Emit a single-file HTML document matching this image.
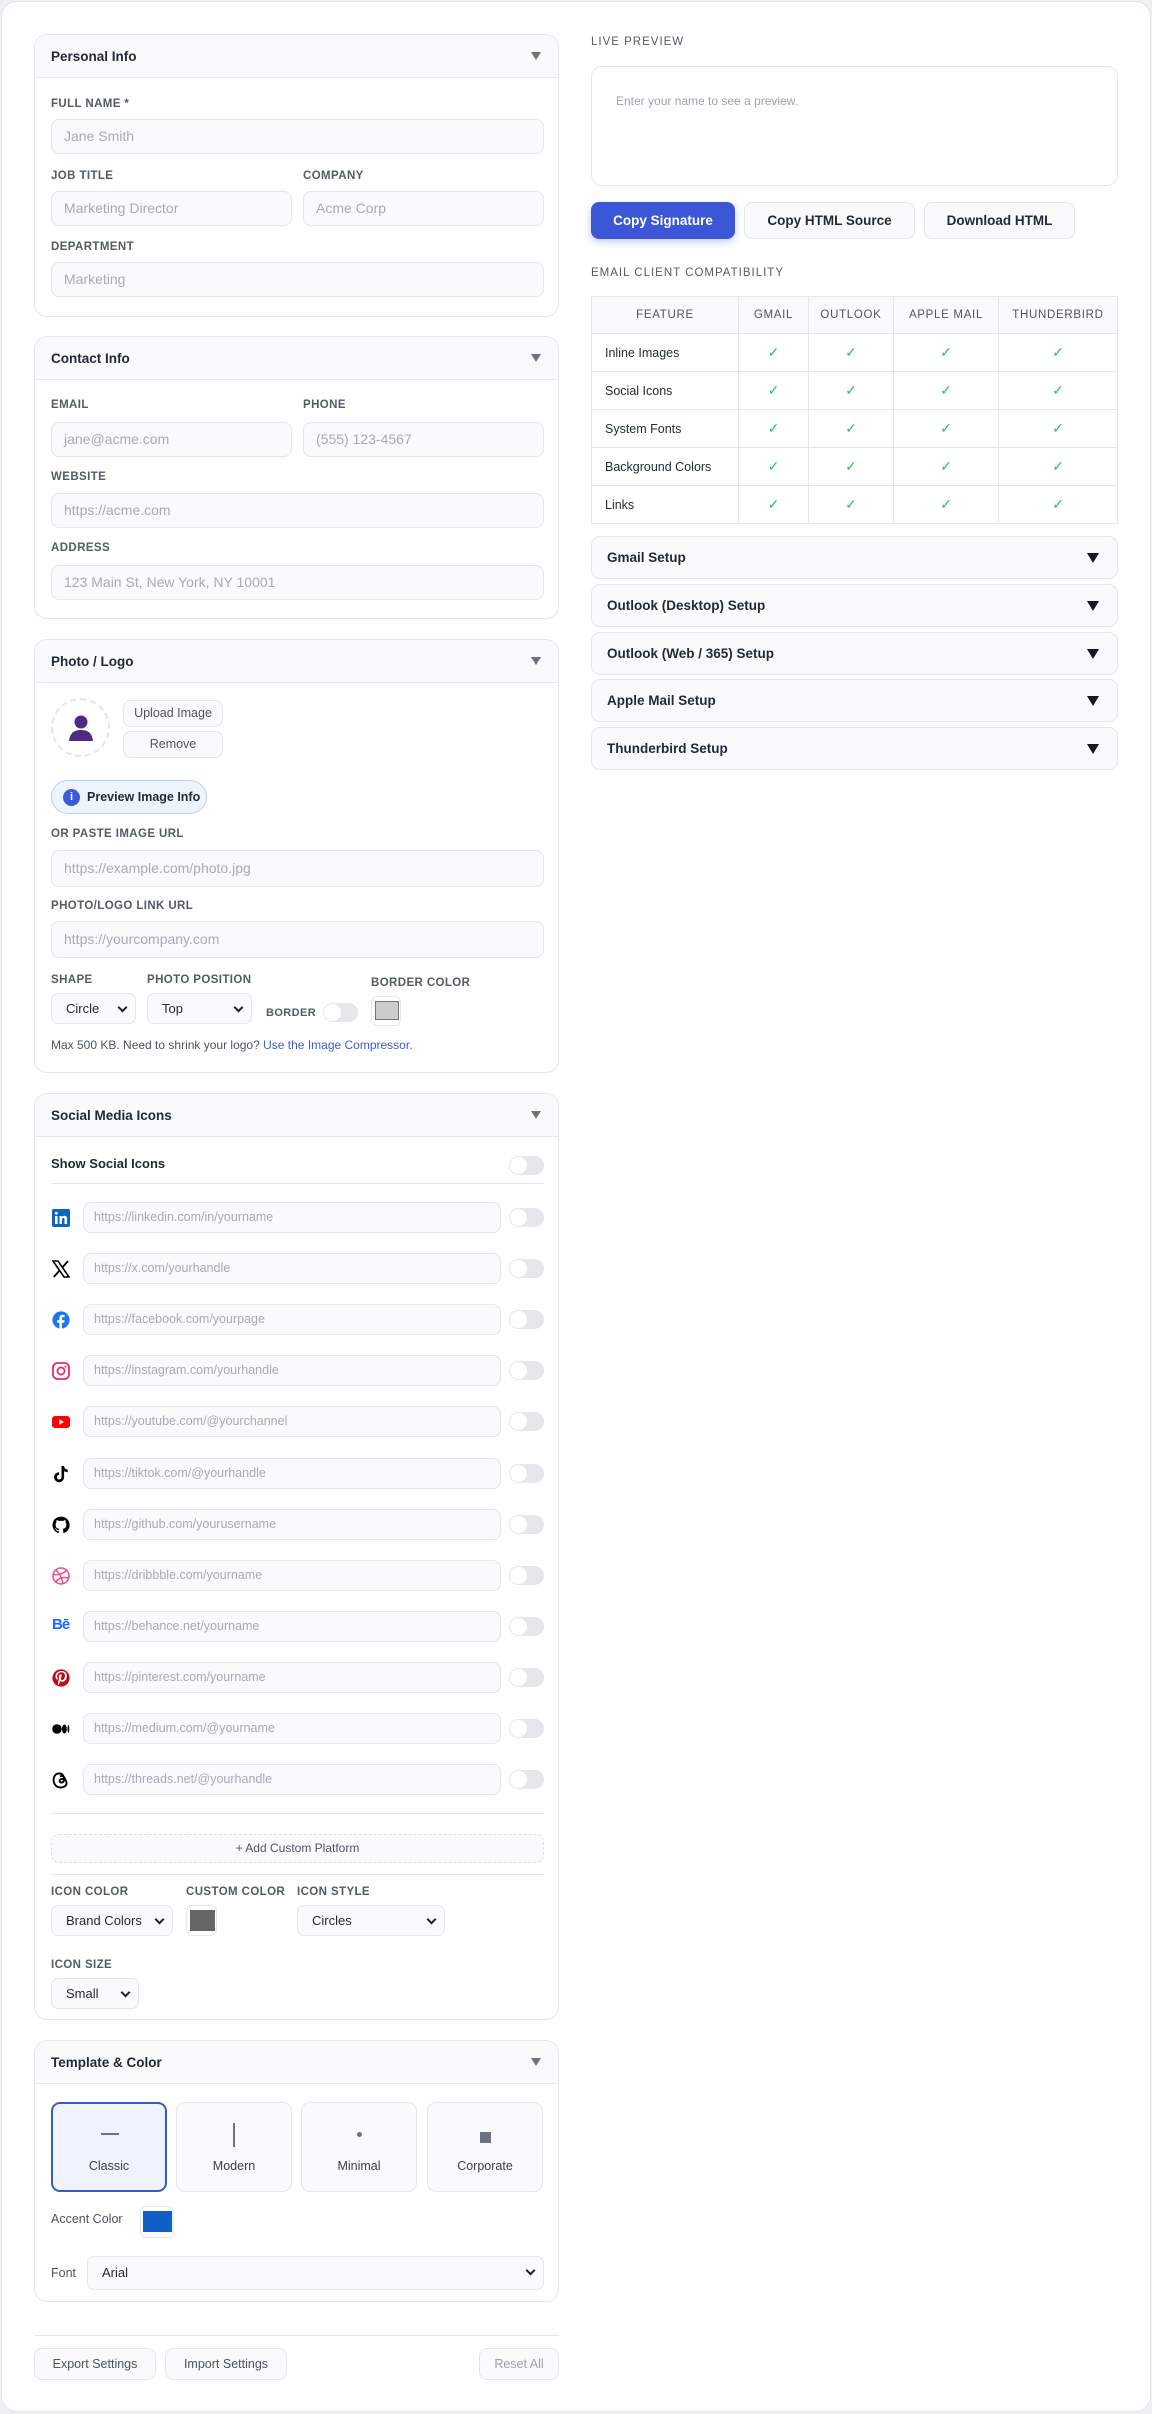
<!DOCTYPE html>
<html><head><meta charset="utf-8"><style>
*{box-sizing:border-box;margin:0;padding:0}
body{width:1152px;height:2414px;background:#eef0f3;font-family:"Liberation Sans",Arial,sans-serif;position:relative;overflow:hidden;color:#111827}
.a{position:absolute}
.wrap{left:1px;top:1px;width:1150px;height:2411px;background:#fff;border:1px solid #e3e6ea;border-radius:16px}
.card{position:absolute;left:34px;width:525px;border:1px solid #e3e7ec;border-radius:13px;background:#fff;overflow:hidden}
.hd{height:43px;background:#f8fafc;border-bottom:1px solid #e6e9ee;padding:0 0 0 16px;font-size:13.5px;font-weight:bold;line-height:43px;color:#1f2937;position:relative}
.hd:after{content:"";position:absolute;right:17px;top:17px;border-left:5px solid transparent;border-right:5px solid transparent;border-top:8px solid #6b7280}
.lb{position:absolute;font-size:11.5px;font-weight:bold;color:#525b68;letter-spacing:.4px}
.in{position:absolute;height:35px;background:#f8fafc;border:1px solid #e3e7ec;border-radius:8px;font-size:14px;color:#a6acb5;padding-left:12px;line-height:33px;white-space:nowrap}
.btn{position:absolute;border:1px solid #e3e7ec;border-radius:8px;background:#f8fafc;font-size:12.5px;color:#4b5563;text-align:center}
.sel{position:absolute;height:31px;background:#f8fafc;border:1px solid #e3e7ec;border-radius:7px;font-size:13px;color:#1f2937;padding-left:14px;line-height:29px}
.sel:after{content:"";position:absolute;right:9px;top:10px;width:5px;height:5px;border-right:2px solid #222;border-bottom:2px solid #222;transform:rotate(45deg)}
.tg{position:absolute;width:35px;height:19px;border-radius:10px;background:#e5e7eb}
.tg:before{content:"";position:absolute;left:1px;top:1px;width:17px;height:17px;border-radius:50%;background:#fff}
.soc{position:absolute;left:17px;width:18px;height:18px}
.acc{position:absolute;left:591px;width:527px;height:43px;border:1px solid #e3e7ec;border-radius:9px;background:#f8fafc;font-size:13.5px;font-weight:bold;color:#1f2937;padding-left:15px;line-height:41px}
.acc:after{content:"";position:absolute;right:18px;top:16px;border-left:6px solid transparent;border-right:6px solid transparent;border-top:10px solid #111827}
table{border-collapse:collapse;position:absolute;left:591px;top:296px;width:527px;font-size:12px}
td,th{border:1px solid #e3e7ec;height:38px}
th{height:37px;background:#f8fafc;font-weight:normal;color:#4b5563;letter-spacing:.7px;font-size:11.5px}
td{text-align:center;color:#22c55e;font-size:14px}
td.f{text-align:left;padding-left:13px;color:#1f2937;font-size:12.5px}
.tile{position:absolute;top:61px;width:116px;height:90px;border:1px solid #e3e7ec;border-radius:9px;background:#f8fafc;text-align:center;font-size:12.5px;color:#374151}
.tile span{position:absolute;left:0;right:0;top:56px}
</style></head><body>
<div class="a wrap"></div>

<div class="card" style="top:34px;height:283px">
<div class="hd">Personal Info</div>
<div class="lb" style="left:16px;top:63px">FULL NAME *</div>
<div class="in" style="left:16px;top:84px;width:493px">Jane Smith</div>
<div class="lb" style="left:16px;top:135px">JOB TITLE</div>
<div class="lb" style="left:268px;top:135px">COMPANY</div>
<div class="in" style="left:16px;top:156px;width:241px">Marketing Director</div>
<div class="in" style="left:268px;top:156px;width:241px">Acme Corp</div>
<div class="lb" style="left:16px;top:206px">DEPARTMENT</div>
<div class="in" style="left:16px;top:227px;width:493px">Marketing</div>
</div>

<div class="card" style="top:336px;height:283px">
<div class="hd">Contact Info</div>
<div class="lb" style="left:16px;top:62px">EMAIL</div>
<div class="lb" style="left:268px;top:62px">PHONE</div>
<div class="in" style="left:16px;top:85px;width:241px">jane@acme.com</div>
<div class="in" style="left:268px;top:85px;width:241px">(555) 123-4567</div>
<div class="lb" style="left:16px;top:134px">WEBSITE</div>
<div class="in" style="left:16px;top:156px;width:493px">https://acme.com</div>
<div class="lb" style="left:16px;top:205px">ADDRESS</div>
<div class="in" style="left:16px;top:228px;width:493px">123 Main St, New York, NY 10001</div>
</div>

<div class="card" style="top:639px;height:434px">
<div class="hd">Photo / Logo</div>
<div class="a" style="left:16px;top:58px;width:59px;height:59px;border:2px dashed #e2e5ea;border-radius:50%">
<svg class="a" style="left:15px;top:14px" width="26" height="28" viewBox="0 0 26 28"><circle cx="13" cy="8" r="6.5" fill="#4c2a85"/><path d="M1 27 C2 18 7 16 13 16 C19 16 24 18 25 27Z" fill="#4c2a85"/></svg></div>
<div class="btn" style="left:88px;top:60px;width:100px;height:27px;line-height:25px">Upload Image</div>
<div class="btn" style="left:88px;top:91px;width:100px;height:27px;line-height:25px">Remove</div>
<div class="a" style="left:16px;top:140px;width:156px;height:34px;border:1px solid #bcd0ee;border-radius:17px;background:#eef4fd;font-size:12.5px;font-weight:bold;color:#1f2937;line-height:32px;padding-left:35px">Preview Image Info
<div class="a" style="left:11px;top:8px;width:17px;height:17px;border-radius:50%;background:#3c5bd6;color:#fff;font-size:11px;line-height:17px;text-align:center">i</div></div>
<div class="lb" style="left:16px;top:188px">OR PASTE IMAGE URL</div>
<div class="in" style="left:16px;top:210px;width:493px;height:37px;line-height:35px">https://example.com/photo.jpg</div>
<div class="lb" style="left:16px;top:260px">PHOTO/LOGO LINK URL</div>
<div class="in" style="left:16px;top:281px;width:493px;height:37px;line-height:35px">https://yourcompany.com</div>
<div class="lb" style="left:16px;top:334px">SHAPE</div>
<div class="lb" style="left:112px;top:334px">PHOTO POSITION</div>
<div class="lb" style="left:336px;top:337px">BORDER COLOR</div>
<div class="sel" style="left:16px;top:353px;width:85px">Circle</div>
<div class="sel" style="left:112px;top:353px;width:105px">Top</div>
<div class="lb" style="left:231px;top:367px;font-size:11px">BORDER</div>
<div class="tg" style="left:288px;top:363px"></div>
<div class="a" style="left:336px;top:356px;width:30px;height:30px;border:1px solid #e3e7ec;border-radius:6px;background:#fff"><div class="a" style="left:3px;top:4px;width:24px;height:19px;background:#ccc;border:1px solid #777"></div></div>
<div class="a" style="left:16px;top:398px;font-size:12px;color:#4b5563">Max 500 KB. Need to shrink your logo? <span style="color:#3c5bd6">Use the Image Compressor.</span></div>
</div>

<div class="card" style="top:1093px;height:927px">
<div class="hd">Social Media Icons</div>
<div class="a" style="left:16px;top:62px;font-size:13px;font-weight:bold;color:#1f2937">Show Social Icons</div>
<div class="tg" style="left:474px;top:62px"></div>
<div class="a" style="left:16px;top:89px;width:493px;height:1px;background:#e5e7eb"></div>

<svg class="soc" style="top:115px" viewBox="0 0 18 18"><rect width="18" height="18" rx="2" fill="#0a66c2"/><rect x="3" y="7" width="2.6" height="8" fill="#fff"/><circle cx="4.3" cy="4.3" r="1.5" fill="#fff"/><path d="M7.5 7h2.4v1.2c.5-.8 1.4-1.4 2.6-1.4 2 0 2.6 1.3 2.6 3.3V15h-2.6v-4.3c0-1-.3-1.700-1.2-1.7s-1.3.7-1.3 1.7V15H7.5z" fill="#fff"/></svg>
<svg class="soc" style="top:166px" viewBox="0 0 18 18"><path d="M1 1h5l11 16h-5z" fill="none" stroke="#000" stroke-width="1.6"/><path d="M16 1L10.2 7.6M1.8 17l6-6.8" stroke="#000" stroke-width="1.8"/></svg>
<svg class="soc" style="top:217px" viewBox="0 0 18 18"><circle cx="9" cy="9" r="8.6" fill="#1877f2"/><path d="M10 18v-6.3h2.2l.4-2.6H10V7.5c0-.7.4-1.4 1.5-1.4h1.1V3.9s-1-.2-2-.2C8.6 3.7 7.4 5 7.4 7v2.1H5.2v2.6h2.2V18z" fill="#fff"/></svg>
<svg class="soc" style="top:268px" viewBox="0 0 18 18"><rect x="1" y="1" width="16" height="16" rx="4.5" fill="none" stroke="#e1306c" stroke-width="1.8"/><circle cx="9" cy="9" r="3.6" fill="none" stroke="#e1306c" stroke-width="1.8"/><circle cx="13.4" cy="4.6" r="1" fill="#e1306c"/></svg>
<svg class="soc" style="top:319px" viewBox="0 0 18 18"><rect x="0" y="3" width="18" height="12" rx="3" fill="#f00"/><path d="M7.3 6.3v5.4L12 9z" fill="#fff"/></svg>
<svg class="soc" style="top:371px" viewBox="0 0 18 18"><path d="M9.5 1h2.6c.2 2 1.4 3.4 3.6 3.6v2.6c-1.4 0-2.6-.5-3.6-1.2v6.2a5 5 0 1 1-5-5v2.7a2.3 2.3 0 1 0 2.4 2.3z" fill="#000"/></svg>
<svg class="soc" style="top:422px" viewBox="0 0 18 18"><path d="M9 .6a8.4 8.4 0 0 0-2.7 16.4c.4 0 .6-.2.6-.4v-1.6c-2.300.5-2.800-1-2.800-1-.4-1-.9-1.200-.9-1.200-.8-.5 0-.5 0-.5.8.1 1.300.9 1.300.9.7 1.300 2 .9 2.400.7.1-.5.3-.9.5-1.100-1.900-.2-3.800-.9-3.800-4.100 0-.9.3-1.700.9-2.300-.1-.2-.4-1.100.1-2.300 0 0 .7-.2 2.300.9a8 8 0 0 1 4.200 0c1.600-1.100 2.300-.9 2.300-.9.5 1.200.2 2.100.1 2.300.5.6.9 1.400.9 2.300 0 3.200-2 3.900-3.800 4.100.3.3.6.8.6 1.500v2.300c0 .2.1.5.6.4A8.4 8.4 0 0 0 9 .6z" fill="#000"/></svg>
<svg class="soc" style="top:473px" viewBox="0 0 18 18"><g fill="none" stroke="#ea4c89" stroke-width="1.5"><circle cx="9" cy="9" r="8"/><path d="M4 3c3 3 6 8 7 14M1.5 7.5c4 .5 9 0 13-4M3.5 15c3-4 7-5.5 13-4"/></g></svg>
<div class="soc" style="top:522px;font-size:15px;font-weight:bold;color:#1769ff;line-height:18px;letter-spacing:-1px">Bē</div>
<svg class="soc" style="top:575px" viewBox="0 0 18 18"><circle cx="9" cy="9" r="8.6" fill="#bd081c"/><path d="M8.3 11.4c-.4 2-.9 3.9-2.2 4.9-.4-3 .6-5.2 1.1-7.5-.8-1.4.1-4.2 1.9-3.5 2.1.8-1.9 5.1.8 5.7 2.8.6 4-4.9 2.2-6.7-2.6-2.6-7.5-.1-6.9 3.7.1.9 1.1 1.2.4 2.5-1.7-.4-2.2-1.7-2.1-3.4.1-2.8 2.5-4.8 5-5 3.1-.4 5.9 1.1 6.3 4 .5 3.3-1.4 6.9-4.7 6.6-.9-.1-1.3-.5-2-1z" fill="#fff"/></svg>
<svg class="soc" style="top:626px" viewBox="0 0 18 18"><ellipse cx="5" cy="9" rx="4.8" ry="4.8" fill="#000"/><ellipse cx="12.4" cy="9" rx="2.4" ry="4.5" fill="#000"/><ellipse cx="16.4" cy="9" rx=".9" ry="4" fill="#000"/></svg>
<svg class="soc" style="top:677px" viewBox="0 0 18 18"><path d="M13 8.3C12.6 5 9.8 4.3 8 5.5M13 8.3c-2.5-1-5.5-.3-5.4 1.7.1 2 3.5 2.1 4.2-.2.8-2.7-.4-6.9-3.8-7.3C3.5 2 1.5 5.5 1.6 9c.1 4 2.6 7.5 7.1 7.5 3.3 0 5.8-1.8 5.8-4.3 0-1.5-.7-3-1.5-3.9" fill="none" stroke="#000" stroke-width="1.9"/></svg>

<div class="in" style="left:48px;top:108px;width:418px;height:31px;line-height:29px;font-size:12.5px;padding-left:10px">https://linkedin.com/in/yourname</div>
<div class="in" style="left:48px;top:159px;width:418px;height:31px;line-height:29px;font-size:12.5px;padding-left:10px">https://x.com/yourhandle</div>
<div class="in" style="left:48px;top:210px;width:418px;height:31px;line-height:29px;font-size:12.5px;padding-left:10px">https://facebook.com/yourpage</div>
<div class="in" style="left:48px;top:261px;width:418px;height:31px;line-height:29px;font-size:12.5px;padding-left:10px">https://instagram.com/yourhandle</div>
<div class="in" style="left:48px;top:312px;width:418px;height:31px;line-height:29px;font-size:12.5px;padding-left:10px">https://youtube.com/@yourchannel</div>
<div class="in" style="left:48px;top:364px;width:418px;height:31px;line-height:29px;font-size:12.5px;padding-left:10px">https://tiktok.com/@yourhandle</div>
<div class="in" style="left:48px;top:415px;width:418px;height:31px;line-height:29px;font-size:12.5px;padding-left:10px">https://github.com/yourusername</div>
<div class="in" style="left:48px;top:466px;width:418px;height:31px;line-height:29px;font-size:12.5px;padding-left:10px">https://dribbble.com/yourname</div>
<div class="in" style="left:48px;top:517px;width:418px;height:31px;line-height:29px;font-size:12.5px;padding-left:10px">https://behance.net/yourname</div>
<div class="in" style="left:48px;top:568px;width:418px;height:31px;line-height:29px;font-size:12.5px;padding-left:10px">https://pinterest.com/yourname</div>
<div class="in" style="left:48px;top:619px;width:418px;height:31px;line-height:29px;font-size:12.5px;padding-left:10px">https://medium.com/@yourname</div>
<div class="in" style="left:48px;top:670px;width:418px;height:31px;line-height:29px;font-size:12.5px;padding-left:10px">https://threads.net/@yourhandle</div>

<div class="tg" style="left:474px;top:114px"></div><div class="tg" style="left:474px;top:165px"></div><div class="tg" style="left:474px;top:216px"></div><div class="tg" style="left:474px;top:267px"></div><div class="tg" style="left:474px;top:318px"></div><div class="tg" style="left:474px;top:370px"></div><div class="tg" style="left:474px;top:421px"></div><div class="tg" style="left:474px;top:472px"></div><div class="tg" style="left:474px;top:523px"></div><div class="tg" style="left:474px;top:574px"></div><div class="tg" style="left:474px;top:625px"></div><div class="tg" style="left:474px;top:676px"></div>

<div class="a" style="left:16px;top:719px;width:493px;height:1px;background:#e5e7eb"></div>
<div class="a" style="left:16px;top:740px;width:493px;height:29px;border:1px dashed #dde1e7;border-radius:8px;background:#f8fafc;text-align:center;font-size:12px;color:#4b5563;line-height:27px">+ Add Custom Platform</div>
<div class="a" style="left:16px;top:780px;width:493px;height:1px;background:#e5e7eb"></div>
<div class="lb" style="left:16px;top:792px">ICON COLOR</div>
<div class="lb" style="left:151px;top:792px">CUSTOM COLOR</div>
<div class="lb" style="left:262px;top:792px">ICON STYLE</div>
<div class="sel" style="left:16px;top:811px;width:122px">Brand Colors</div>
<div class="a" style="left:151px;top:811px;width:31px;height:31px;border:1px solid #e3e7ec;border-radius:6px;background:#fff"><div class="a" style="left:3px;top:4px;width:25px;height:21px;background:#666"></div></div>
<div class="sel" style="left:262px;top:811px;width:148px">Circles</div>
<div class="lb" style="left:16px;top:865px">ICON SIZE</div>
<div class="sel" style="left:16px;top:884px;width:88px">Small</div>
</div>

<div class="card" style="top:2040px;height:262px">
<div class="hd">Template &amp; Color</div>
<div class="tile" style="left:16px;border:2px solid #3c5bbf;background:#eef3fd"><div class="a" style="left:48px;top:29px;width:18px;height:2px;background:#6b7280"></div><span style="top:55px">Classic</span></div>
<div class="tile" style="left:141px"><div class="a" style="left:56px;top:20px;width:2px;height:24px;background:#6b7280"></div><span>Modern</span></div>
<div class="tile" style="left:266px"><div class="a" style="left:55px;top:29px;width:5px;height:5px;border-radius:50%;background:#6b7280"></div><span>Minimal</span></div>
<div class="tile" style="left:392px"><div class="a" style="left:52px;top:29px;width:11px;height:11px;background:#6b7280"></div><span>Corporate</span></div>
<div class="a" style="left:16px;top:171px;font-size:12.5px;color:#4b5563">Accent Color</div>
<div class="a" style="left:105px;top:165px;width:34px;height:32px;border:1px solid #e3e7ec;border-radius:6px;background:#fff"><div class="a" style="left:2px;top:4px;width:29px;height:21px;background:#0f5fc5"></div></div>
<div class="a" style="left:16px;top:225px;font-size:12.5px;color:#4b5563">Font</div>
<div class="sel" style="left:52px;top:215px;width:457px;height:34px;line-height:32px;font-size:13px">Arial</div>
</div>

<div class="a" style="left:34px;top:2335px;width:525px;height:1px;background:#e5e7eb"></div>
<div class="btn" style="left:34px;top:2348px;width:122px;height:32px;line-height:30px;font-size:12.5px">Export Settings</div>
<div class="btn" style="left:165px;top:2348px;width:122px;height:32px;line-height:30px;font-size:12.5px">Import Settings</div>
<div class="btn" style="left:479px;top:2348px;width:80px;height:32px;line-height:30px;font-size:12.5px;color:#9ca3af">Reset All</div>

<div class="lb" style="left:591px;top:36px;letter-spacing:1px;font-weight:normal">LIVE PREVIEW</div>
<div class="a" style="left:591px;top:66px;width:527px;height:120px;border:1px solid #e3e7ec;border-radius:11px"></div>
<div class="a" style="left:616px;top:94px;font-size:12px;color:#9ca3af">Enter your name to see a preview.</div>
<div class="a" style="left:591px;top:202px;width:144px;height:37px;border-radius:8px;background:#3b57d8;color:#fff;font-size:13.5px;font-weight:bold;text-align:center;line-height:37px;box-shadow:0 3px 8px rgba(59,87,216,.3)">Copy Signature</div>
<div class="btn" style="left:744px;top:202px;width:171px;height:37px;line-height:35px;font-size:13.5px;font-weight:bold;color:#1f2937">Copy HTML Source</div>
<div class="btn" style="left:924px;top:202px;width:151px;height:37px;line-height:35px;font-size:13.5px;font-weight:bold;color:#1f2937">Download HTML</div>
<div class="lb" style="left:591px;top:267px;letter-spacing:1px;font-weight:normal">EMAIL CLIENT COMPATIBILITY</div>
<table>
<tr><th style="width:147px">FEATURE</th><th style="width:70px">GMAIL</th><th style="width:85px">OUTLOOK</th><th style="width:105px">APPLE MAIL</th><th>THUNDERBIRD</th></tr>
<tr><td class="f">Inline Images</td><td>✓</td><td>✓</td><td>✓</td><td>✓</td></tr>
<tr><td class="f">Social Icons</td><td>✓</td><td>✓</td><td>✓</td><td>✓</td></tr>
<tr><td class="f">System Fonts</td><td>✓</td><td>✓</td><td>✓</td><td>✓</td></tr>
<tr><td class="f">Background Colors</td><td>✓</td><td>✓</td><td>✓</td><td>✓</td></tr>
<tr><td class="f">Links</td><td>✓</td><td>✓</td><td>✓</td><td>✓</td></tr>
</table>
<div class="acc" style="top:536px">Gmail Setup</div>
<div class="acc" style="top:584px">Outlook (Desktop) Setup</div>
<div class="acc" style="top:632px">Outlook (Web / 365) Setup</div>
<div class="acc" style="top:679px">Apple Mail Setup</div>
<div class="acc" style="top:727px">Thunderbird Setup</div>
</body></html>
